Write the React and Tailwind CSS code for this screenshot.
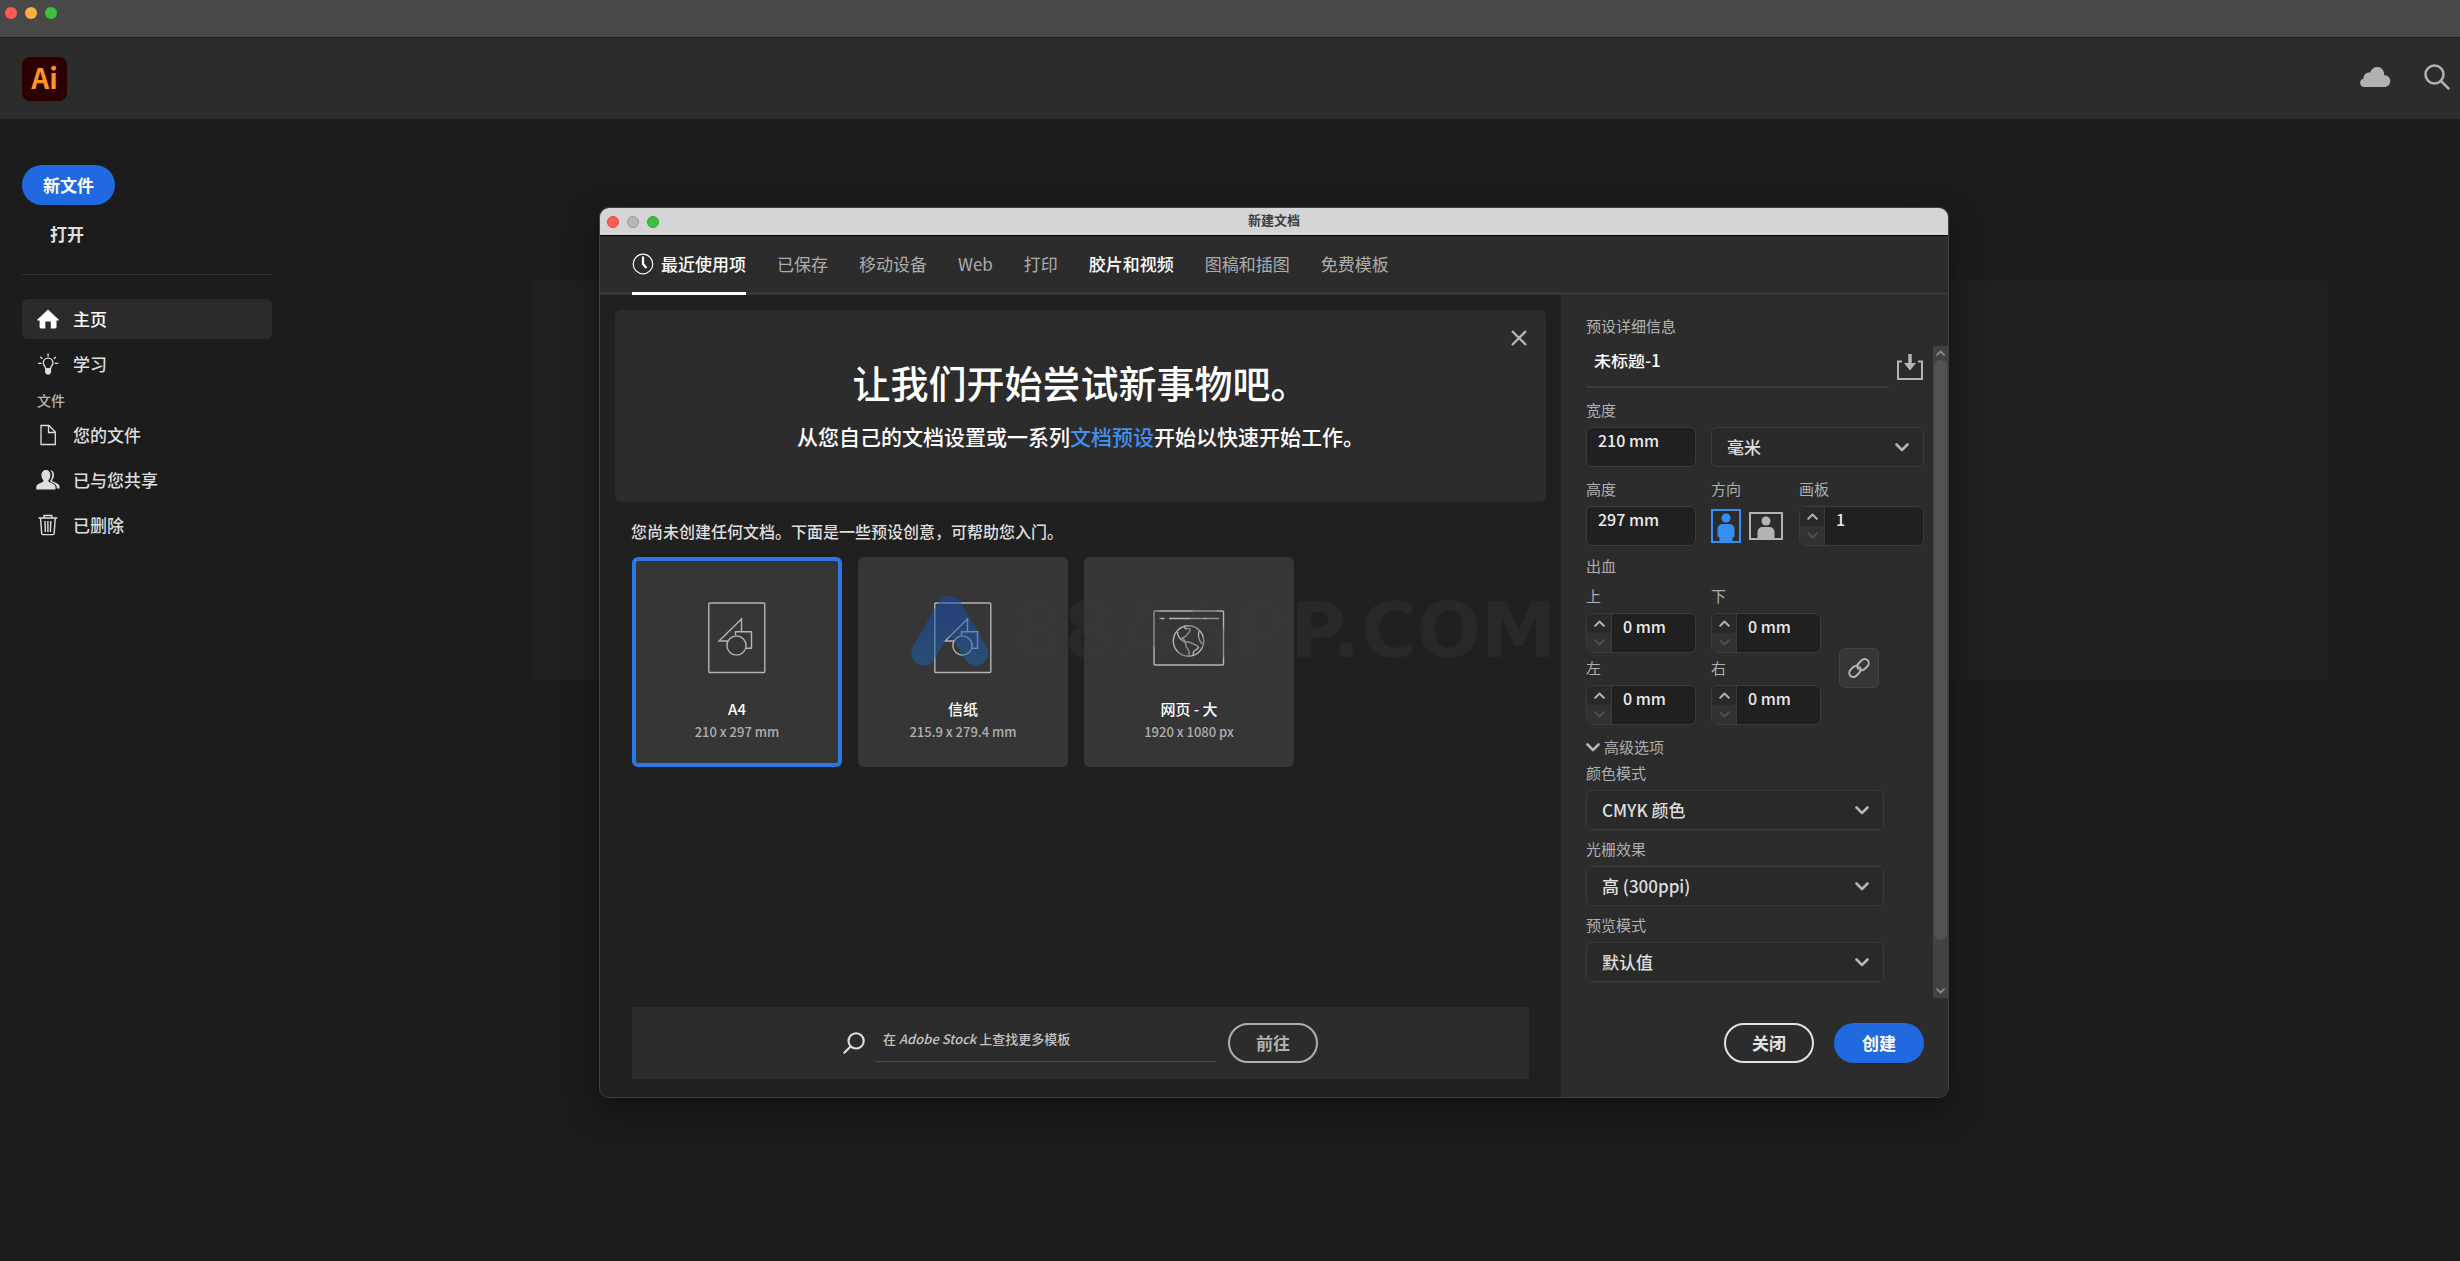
import { useState } from "react";

const sideMain = [
    { name: "主页", icon: HomeIcon },
    { name: "学习", icon: BulbIcon },
];

const sideFiles = [
    { name: "您的文件", icon: FileIcon },
    { name: "已与您共享", icon: PeopleIcon },
    { name: "已删除", icon: TrashIcon },
];

const tabs = ["最近使用项", "已保存", "移动设备", "Web", "打印", "胶片和视频", "图稿和插图", "免费模板"];

const presets = [
    { name: "A4", size: "210 x 297 mm", icon: PrintIcon },
    { name: "信纸", size: "215.9 x 279.4 mm", icon: PrintIcon },
    { name: "网页 - 大", size: "1920 x 1080 px", icon: WebIcon },
];

function HomeIcon() {
    return (
        <svg viewBox="0 0 22 20" className="w-[22px] h-5" fill="currentColor">
            <path d="M11 .5 21.6 10.4c.5.5.2 1.2-.5 1.2H19.500V18c0 .9-.5 1.400-1.400 1.400h-4.300v-6.200c0-.4-.3-.7-.7-.7H9c-.4 0-.7.3-.7.7v6.200H4c-.9 0-1.400-.5-1.400-1.400v-6.400H.9c-.7 0-1-.7-.5-1.200Z" />
        </svg>
    );
}

function BulbIcon() {
    return (
        <svg viewBox="0 0 22 22" className="w-[22px] h-[22px]" fill="none" stroke="currentColor" strokeWidth="1.400">
            <path d="M8.800 16c0-2.600-2.500-3.300-2.500-6.100a4.800 4.800 0 0 1 9.600 0c0 2.800-2.500 3.500-2.500 6.100Z" />
            <path d="M8.800 16h4.600v3.200l-1.200 1.600H10l-1.200-1.600Z" fill="currentColor" />
            <path d="M11.100.5v3M1 10.400h3.500M17.800 10.400h3.500M3.200 4l2.200 1.800M19 4l-2.200 1.800" />
        </svg>
    );
}

function FileIcon() {
    return (
        <svg viewBox="0 0 22 22" className="w-[22px] h-[22px]" fill="none" stroke="currentColor" strokeWidth="1.300">
            <path d="M4 1.500h8L18.300 8v12.500H4ZM11.500 1.500v7h6.800" />
        </svg>
    );
}

function PeopleIcon() {
    return (
        <svg viewBox="0 0 24 22" className="w-6 h-[22px]" fill="currentColor">
            <path d="M10 1c2.700 0 4.400 2.100 4.400 5 0 2.200-.8 3.900-1.800 5-.5.600-.3 1.500.5 1.900 3 1.300 6.400 2.200 6.400 5v2.600H.3v-2.600c0-2.800 3.400-3.700 6.400-5 .8-.4 1-1.300.5-1.900-1-1.100-1.800-2.800-1.800-5 0-2.900 1.900-5 4.600-5Z" />
            <path d="M14 1c2.700 0 4 2.200 4 4.800 0 2.300-.8 3.900-1.700 5-.4.6-.2 1.200.5 1.600 3.200 1.500 6.800 2.300 6.800 5.600v1.500h-2.700c0-4.200-2.900-5.100-5.800-6.500-.9-.5-1.100-1.200-.5-2C17 7.500 16.800 3 14 1Z" />
        </svg>
    );
}

function TrashIcon() {
    return (
        <svg viewBox="0 0 22 22" className="w-[22px] h-[22px]" fill="none" stroke="currentColor" strokeWidth="1.400">
            <path d="M1.500 4h18.800M7 4V1.500h7.800V4M3.500 4l1.200 15.600c0 .6.400 1 1 1h10.400c.6 0 1-.4 1-1L18.300 4M8 7l.4 11M10.900 7v11M13.800 7l-.4 11" />
        </svg>
    );
}

function CloudIcon() {
    return (
        <svg viewBox="0 0 32 22" className="w-8 h-[22px]" fill="currentColor">
            <path d="M5 21A4.200 4.200 0 0 1 4.500 12.700C4.300 8.800 7.300 6.200 11 6.600 12.500 3 15 1 18.300 1c4 0 7 3.200 6.900 8.200 3.400-.2 6.100 2.500 6.100 5.800 0 3.400-2.600 6-5.800 6Z" />
        </svg>
    );
}

function SearchIcon({ className }) {
    return (
        <svg viewBox="0 0 26 26" className={className} fill="none" stroke="currentColor" strokeWidth="2.500" strokeLinecap="round">
            <circle cx="10.500" cy="10.500" r="9" />
            <path d="m17 17 7.500 7.500" />
        </svg>
    );
}

function ClockIcon() {
    return (
        <svg viewBox="0 0 22 22" className="w-[22px] h-[22px]" fill="none" stroke="currentColor">
            <circle cx="11" cy="11" r="9.800" strokeWidth="1.200" />
            <path d="M11 3.500V11l3.500 4" strokeWidth="2.200" />
        </svg>
    );
}

function PrintIcon() {
    return (
        <svg viewBox="0 0 58 72" className="w-[58px] h-[72px]" fill="none" stroke="currentColor" strokeWidth="1.400">
            <rect x=".800" y="1" width="56" height="69.500" rx="1" />
            <path d="M20 39H11L33.500 17v13M27.500 33v-3.200h16v16.400h-6" />
            <circle cx="28.500" cy="43.500" r="9.600" />
        </svg>
    );
}

function WebIcon() {
    return (
        <svg viewBox="0 0 72 56" className="w-[72px] h-14" fill="none" stroke="currentColor" strokeWidth="1.400">
            <rect x="1" y="1" width="69.500" height="54" rx="1" />
            <path d="M6.500 8.500h5M16 8.500h50" />
            <circle cx="35.500" cy="31" r="15.200" />
            <path d="M31.500 17c.5 1.800 1.500 2 3 1.500 2-.5 3 .5 2.500 2-1 2.500-2 2.500-3 4.500-.8 1.700-3.500 2-4.500 3 .8 1.200 2.500 2 3 4M24.500 22c0 5.500 3.500 7.500 8 11 .5 1.500 0 3.500 1.500 5 2.500 2 2.500 4.500 2 8M32.500 31.800c2.500 0 5 .2 7 1.700 2 1.500 6 1.800 6 4-.5 2-4.500 2.500-5 4.500-.3 1.500 0 2-.5 3M46.500 20.500c-2 3-1 6.500 0 9.500.5 1.500 1.500 3 3 3.500" />
        </svg>
    );
}

function Chevron({ up, className }) {
    return (
        <svg viewBox="0 0 14 9" className={className} fill="none" stroke="currentColor" strokeWidth="2.600" strokeLinecap="round" strokeLinejoin="round">
            <path d={up ? "m1.500 7.500 5.500-5.500 5.500 5.500" : "m1.500 1.500 5.500 5.500 5.500-5.500"} />
        </svg>
    );
}

function SideItem({ item, active, onClick }) {
    const Icon = item.icon;
    return (
        <button
            onClick={onClick}
            className={`flex items-center gap-[13px] h-10 w-full px-3.5 rounded-md text-[17px] font-medium ${active ? "bg-[#2b2b2b] text-white" : "text-[#dedede]"}`}
        >
            <span className="flex justify-center w-6">
                <Icon />
            </span>
            {item.name}
        </button>
    );
}

function TextField({ id, label, value }) {
    return (
        <div className="flex flex-col w-[110px] shrink-0">
            <label htmlFor={id} className="pb-[3px] text-[15px] leading-7 text-[#afafaf]">{label}</label>
            <input
                id={id}
                defaultValue={value}
                className="h-10 w-full rounded-md border border-[#3c3c3c] bg-[#202020] px-[11px] pb-[14px] text-[16px] font-medium text-[#ececec] outline-none"
            />
        </div>
    );
}

function Stepper({ id, label, value, className }) {
    return (
        <div className={`flex min-w-0 flex-col ${className}`}>
            <label htmlFor={id} className="pb-[3px] text-[15px] leading-7 text-[#afafaf]">{label}</label>
            <div className="flex h-10 rounded-md border border-[#3c3c3c] bg-[#202020] overflow-hidden">
                <div className="flex flex-col w-[25px] shrink-0 border-r border-[#3c3c3c]">
                    <button type="button" aria-label={`${label} +`} className="flex flex-1 items-center justify-center bg-[#292929] text-[#afafaf]">
                        <Chevron up className="w-[11px] h-[7px]" />
                    </button>
                    <button type="button" aria-label={`${label} -`} className="flex flex-1 items-center justify-center bg-[#323232] text-[#4e4e4e]">
                        <Chevron className="w-[11px] h-[7px]" />
                    </button>
                </div>
                <input
                    id={id}
                    defaultValue={value}
                    className="w-full min-w-0 px-[11px] pb-[14px] text-[16px] font-medium text-[#ececec] outline-none"
                />
            </div>
        </div>
    );
}

function Dropdown({ id, label, options, hideLabel, className }) {
    return (
        <div className={`flex flex-col ${className}`}>
            {!hideLabel && (
                <label htmlFor={id} className="pb-[3px] text-[15px] leading-7 text-[#afafaf]">{label}</label>
            )}
            <div className="relative">
                <select
                    id={id}
                    aria-label={label}
                    className="block h-10 w-full appearance-none rounded-md border border-[#3c3c3c] bg-[#292929] px-[15px] text-[17px] font-medium text-[#dedede] outline-none"
                >
                    {options.map((option) => (
                        <option key={option}>{option}</option>
                    ))}
                </select>
                <Chevron className="absolute right-[15px] top-4 w-[14px] h-[9px] text-[#b4b4b4] pointer-events-none" />
            </div>
        </div>
    );
}

function Watermark() {
    return (
        <div className="absolute left-[311px] top-[387px] flex items-center gap-[22px] pointer-events-none">
            <svg viewBox="0 0 78 72" className="w-[78px] h-[72px]">
                <defs>
                    <linearGradient id="mark" x1="0" y1="0" x2="0" y2="1">
                        <stop offset="0" stopColor="#1648b8" />
                        <stop offset="1" stopColor="#1a66b4" />
                    </linearGradient>
                </defs>
                <path
                    d="M38.500 1c5 0 9 2.500 11.500 7l25.500 43.500c6 11-4.500 22.500-15.500 18.200-2.500-1-4.300-2.800-5.600-5L42.500 44.500c-2-3.300-5.500-3.300-7.500 0L23.500 64c-1.300 2.300-3 4.500-5.500 5.600C7 74-3.500 62.500 2 51.500L27 8c2.500-4.500 6.500-7 11.500-7Z"
                    fill="url(#mark)"
                    opacity=".5"
                />
            </svg>
            <span className="font-['DejaVu_Sans',sans-serif] text-[76px] leading-[72px] font-bold text-[#3a3a3a]/30">88AAPP.COM</span>
        </div>
    );
}

function PresetDetails() {
    const [orientation, setOrientation] = useState("portrait");

    return (
        <aside className="flex w-[387px] shrink-0 flex-col bg-[#2c2c2c] pl-[25px]">
            <h2 className="pt-[19px] text-[15px] leading-6 text-[#b4b4b4]">预设详细信息</h2>
            <div className="flex h-[652px] justify-between mt-2">
                <form className="flex w-[338px] flex-col">
                    <div className="flex justify-between pt-2">
                        <div className="flex w-[303px] h-[34px] border-b-2 border-[#3a3a3a]">
                            <div className="flex h-[19px] items-end overflow-hidden">
                                <input
                                    aria-label="名称"
                                    defaultValue="未标题-1"
                                    className="h-[26px] w-full shrink-0 px-2 text-[17px] leading-[26px] font-medium text-white outline-none"
                                />
                            </div>
                        </div>
                        <button type="button" aria-label="存储预设" className="h-[26px] text-[#b4b4b4]">
                            <svg viewBox="0 0 28 26" className="w-7 h-[26px]" fill="none" stroke="currentColor" strokeWidth="2">
                                <path d="M6 7.500H2V25h24V7.500h-4" />
                                <path d="M14 0v9" strokeWidth="3.500" />
                                <path d="M8 9h12l-6 7.500Z" fill="currentColor" stroke="none" />
                            </svg>
                        </button>
                    </div>
                    <div className="flex items-end gap-[15px] pt-2">
                        <TextField id="width" label="宽度" value="210 mm" />
                        <Dropdown id="unit" label="单位" hideLabel options={["毫米"]} className="flex-1" />
                    </div>
                    <div className="flex items-end gap-[15px] pt-2">
                        <TextField id="height" label="高度" value="297 mm" />
                        <fieldset className="flex w-[73px] shrink-0 flex-col">
                            <legend className="pb-[3px] text-[15px] leading-7 text-[#afafaf]">方向</legend>
                            <div className="flex h-10 items-center gap-2">
                                <button
                                    type="button"
                                    aria-label="纵向"
                                    onClick={() => setOrientation("portrait")}
                                    className={orientation === "portrait" ? "text-[#378ef0]" : "text-[#b4b4b4]"}
                                >
                                    <svg viewBox="0 0 30 34" className="w-[30px] h-[34px]" fill="currentColor">
                                        <rect x="1" y="1" width="28" height="32" fill="none" stroke="currentColor" strokeWidth="2" />
                                        <circle cx="15" cy="9" r="4.500" />
                                        <path d="M11.500 15h7a5 5 0 0 1 5 5v6.500a2 2 0 0 1-2 2V33h-13v-4.500a2 2 0 0 1-2-2V20a5 5 0 0 1 5-5Z" />
                                    </svg>
                                </button>
                                <button
                                    type="button"
                                    aria-label="横向"
                                    onClick={() => setOrientation("landscape")}
                                    className={orientation === "landscape" ? "text-[#378ef0]" : "text-[#b4b4b4]"}
                                >
                                    <svg viewBox="0 0 34 28" className="w-[34px] h-7" fill="currentColor">
                                        <rect x="1" y="1" width="32" height="26" fill="none" stroke="currentColor" strokeWidth="2" />
                                        <circle cx="17" cy="9" r="4.500" />
                                        <path d="M13.500 15h7a5 5 0 0 1 5 5v7h-17v-7a5 5 0 0 1 5-5Z" />
                                    </svg>
                                </button>
                            </div>
                        </fieldset>
                        <Stepper id="artboards" label="画板" value="1" className="flex-1" />
                    </div>
                    <fieldset className="flex items-center pt-1">
                        <legend className="pt-2 text-[15px] leading-6 text-[#afafaf]">出血</legend>
                        <div className="grid grid-cols-[110px_110px] gap-x-[15px] gap-y-px">
                            <Stepper id="bleed-top" label="上" value="0 mm" />
                            <Stepper id="bleed-bottom" label="下" value="0 mm" />
                            <Stepper id="bleed-left" label="左" value="0 mm" />
                            <Stepper id="bleed-right" label="右" value="0 mm" />
                        </div>
                        <button type="button" aria-label="使所有设置相同" className="flex size-10 items-center justify-center ml-[18px] mt-7 rounded-md border border-[#424242] bg-[#363636] text-[#b4b4b4]">
                            <svg viewBox="0 0 22 22" className="size-[22px]" fill="none" stroke="currentColor" strokeWidth="2" strokeLinecap="round">
                                <path d="M12.500 13.200c1.600.4 3.100-.1 4.200-1.200l2.700-2.700c1.600-1.600 1.800-4.300.3-6-1.700-1.700-4.300-1.700-6 0l-3 3c-1.600 1.600-1.700 3.800-.5 5.500" />
                                <path d="M9.500 8.800c-1.600-.4-3.100.1-4.200 1.200l-2.700 2.700c-1.600 1.600-1.800 4.300-.3 6 1.700 1.700 4.300 1.700 6 0l3-3c1.600-1.600 1.700-3.800.5-5.500" />
                            </svg>
                        </button>
                    </fieldset>
                    <button type="button" className="flex items-center gap-1 mt-[10px] text-[15px] leading-6 text-[#afafaf]">
                        <Chevron className="w-[14px] h-[9px] text-[#b4b4b4]" />
                        高级选项
                    </button>
                    <div className="flex w-[298px] flex-col gap-[5px]">
                        <Dropdown id="color" label="颜色模式" options={["CMYK 颜色"]} />
                        <Dropdown id="raster" label="光栅效果" options={["高 (300ppi)"]} />
                        <Dropdown id="preview" label="预览模式" options={["默认值"]} />
                    </div>
                </form>
                <div className="flex w-[15px] flex-col items-center bg-[#424242] py-1 text-[#8c8c8c]">
                    <Chevron up className="w-[9px] h-[6px]" />
                    <div className="w-[13px] h-[580px] mt-1 rounded-full bg-[#535353]" />
                    <Chevron className="w-[9px] h-[6px] mt-auto" />
                </div>
            </div>
            <div className="flex gap-5 justify-end pt-[25px] pr-6">
                <button className="h-10 w-[90px] rounded-full border-2 border-[#e3e3e3] text-[17px] font-bold text-[#e3e3e3]">关闭</button>
                <button className="h-10 w-[90px] rounded-full bg-[#2069df] text-[17px] font-bold text-white">创建</button>
            </div>
        </aside>
    );
}

function NewDocument() {
    const [tab, setTab] = useState(0);
    const [preset, setPreset] = useState(0);
    const [showHero, setShowHero] = useState(true);

    return (
        <section className="relative flex w-[1350px] min-h-[891px] flex-col overflow-hidden rounded-[10px] border border-[#404040] bg-[#202020] shadow-[0_12px_36px_rgba(0,0,0,0.45)]">
            <div className="grid grid-cols-3 h-7 items-center border-b border-black bg-[#d5d5d5] px-[7px]">
                <div className="flex gap-2">
                    <span className="size-3 rounded-full border border-[#dd463f] bg-[#fc5b56]" />
                    <span className="size-3 rounded-full border border-[#999] bg-[#b7b7b7]" />
                    <span className="size-3 rounded-full border border-[#2ea335] bg-[#3dc040]" />
                </div>
                <h1 className="pb-[3px] text-center text-[13px] leading-5 font-bold text-[#3e3e3e]">新建文档</h1>
            </div>
            <nav className="flex h-[59px] gap-[31px] border-b-3 border-[#363636] bg-[#2c2c2c] px-8">
                {tabs.map((name, index) => (
                    <button
                        key={name}
                        onClick={() => setTab(index)}
                        className={`flex items-center gap-[7px] h-[59px] border-b-3 text-[17px] ${tab === index ? "border-white" : "border-transparent"} ${index === 0 || index === 5 ? "font-medium text-white" : "text-[#acacac]"}`}
                    >
                        {index === 0 && <ClockIcon />}
                        {name}
                    </button>
                ))}
            </nav>
            <div className="flex flex-1">
                <main className="flex flex-1 flex-col">
                    {showHero && (
                        <div className="relative flex h-48 flex-col items-center mt-[15px] mx-[15px] rounded-md bg-[#2c2c2c] pt-[44px] text-white">
                            <button aria-label="关闭提示" onClick={() => setShowHero(false)} className="absolute right-[19px] top-5 text-[#b4b4b4]">
                                <svg viewBox="0 0 16 16" className="size-4" fill="none" stroke="currentColor" strokeWidth="2.400">
                                    <path d="m1 1 14 14M15 1 1 15" />
                                </svg>
                            </button>
                            <h2 className="text-[38px] leading-[56px] font-medium">让我们开始尝试新事物吧。</h2>
                            <p className="pt-[10px] text-[21px] leading-8 font-medium">
                                从您自己的文档设置或一系列<a href="#presets" className="text-[#4390ec]">文档预设</a>开始以快速开始工作。
                            </p>
                        </div>
                    )}
                    <p className="pt-[17px] pl-[31px] text-[16px] leading-6 font-medium text-[#dedede]">您尚未创建任何文档。下面是一些预设创意，可帮助您入门。</p>
                    <div id="presets" className="flex gap-4 pt-[14px] pl-8">
                        {presets.map((item, index) => {
                            const Icon = item.icon;
                            return (
                                <button
                                    key={item.name}
                                    onClick={() => setPreset(index)}
                                    className={`flex size-[210px] flex-col items-center rounded-md border-4 bg-[#363636] ${preset === index ? "border-[#2b78e4]" : "border-[#363636]"}`}
                                >
                                    <span className="flex h-[78px] items-center mt-[38px] text-[#b4b4b4]">
                                        <Icon />
                                    </span>
                                    <span className="mt-5 text-[15px] leading-6 font-medium text-white">{item.name}</span>
                                    <span className="text-[13px] leading-[22px] font-medium text-[#afafaf]">{item.size}</span>
                                </button>
                            );
                        })}
                    </div>
                    <form className="flex h-[72px] items-center justify-center mt-auto mb-[18px] mx-8 bg-[#2c2c2c]">
                        <SearchIcon className="w-[22px] h-[22px] -scale-x-100 text-[#dedede]" />
                        <div className="relative h-9 w-[341px] mt-[2px] ml-[10px] border-b border-[#4a4a4a]">
                            <label htmlFor="stock" className="absolute left-2 top-0 text-[13px] leading-[26px] font-medium text-[#c4c4c4]">
                                在 <i>Adobe Stock</i> 上查找更多模板
                            </label>
                            <input id="stock" className="h-full w-full px-2 text-[13px] text-white outline-none" />
                        </div>
                        <button type="button" className="h-10 w-[90px] ml-3 rounded-full border-2 border-[#afafaf] text-[17px] font-bold text-[#afafaf]">前往</button>
                    </form>
                </main>
                <PresetDetails />
            </div>
            <Watermark />
        </section>
    );
}

export default function App() {
    const [page, setPage] = useState("主页");

    return (
        <div className="relative flex min-h-screen flex-col overflow-hidden bg-[#1c1c1c] font-['Noto_Sans_CJK_SC',sans-serif]">
            <div className="flex h-[38px] gap-2 border-b border-[#202020] bg-[#494949] px-[5px] pt-[7px]">
                <span className="size-3 rounded-full bg-[#fc5b56]" />
                <span className="size-3 rounded-full bg-[#fdb03b]" />
                <span className="size-3 rounded-full bg-[#3dc040]" />
            </div>
            <header className="flex h-[81px] items-center justify-between bg-[#2c2c2c] pl-[22px] pr-[10px]">
                <div className="flex h-11 w-[45px] items-center justify-center rounded-lg bg-[#2b0001] pb-1 text-[28px] font-bold text-[#ff9422]">Ai</div>
                <div className="flex items-center gap-[33px] pb-1 text-[#b1b1b1]">
                    <button aria-label="云文档">
                        <CloudIcon />
                    </button>
                    <button aria-label="搜索">
                        <SearchIcon className="w-[26px] h-[26px]" />
                    </button>
                </div>
            </header>
            <div className="flex flex-1">
                <aside className="w-[272px] shrink-0 pl-[22px] pt-[46px]">
                    <button className="block h-10 w-[93px] rounded-full bg-[#2069df] text-[17px] font-bold text-white">新文件</button>
                    <button className="block h-10 w-[93px] mt-[9px] pl-7 text-left text-[17px] font-bold text-[#dedede]">打开</button>
                    <hr className="mt-5 mb-6 border-[#323232]" />
                    <nav className="flex flex-col gap-[5px]">
                        {sideMain.map((item) => (
                            <SideItem key={item.name} item={item} active={page === item.name} onClick={() => setPage(item.name)} />
                        ))}
                    </nav>
                    <h2 className="pt-1 pb-[3px] pl-[15px] text-[14px] leading-6 font-medium text-[#b4b4b4]">文件</h2>
                    <nav className="flex flex-col gap-[5px]">
                        {sideFiles.map((item) => (
                            <SideItem key={item.name} item={item} active={page === item.name} onClick={() => setPage(item.name)} />
                        ))}
                    </nav>
                </aside>
                <main className="flex-1 pt-[162px] pl-[261px] pr-[133px]">
                    <div className="h-[399px] bg-[#202020]" />
                </main>
            </div>
            <div className="absolute inset-x-0 top-[207px] flex justify-center pl-[88px]">
                <NewDocument />
            </div>
        </div>
    );
}
